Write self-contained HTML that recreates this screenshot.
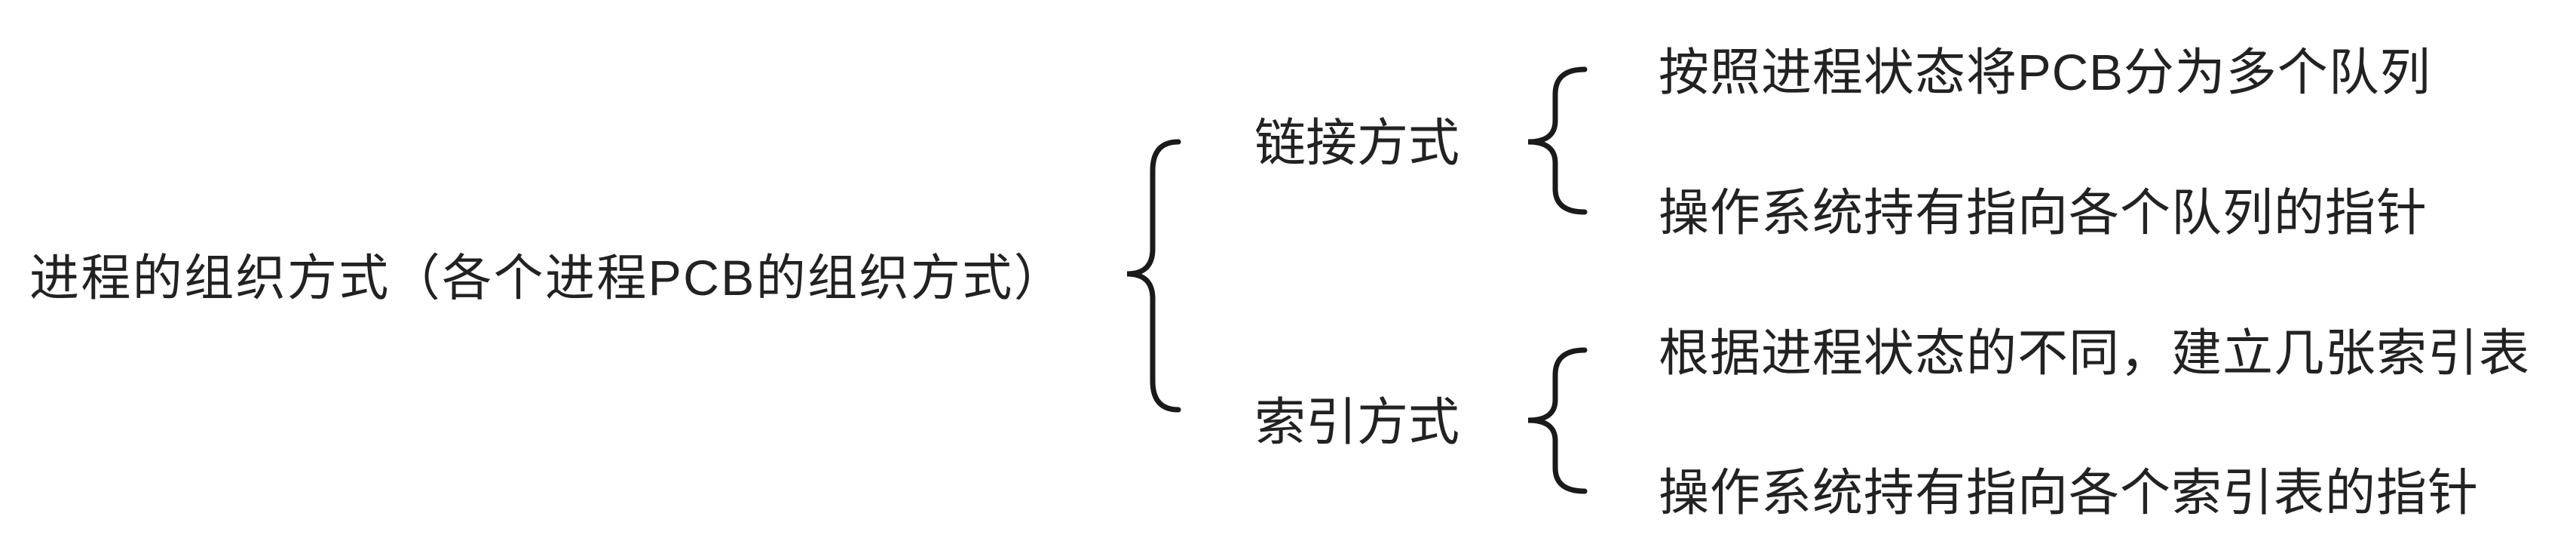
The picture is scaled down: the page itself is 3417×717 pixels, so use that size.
<!DOCTYPE html>
<html><head><meta charset="utf-8"><style>
html,body{margin:0;padding:0;background:#fff;}
body{width:3417px;height:717px;position:relative;overflow:hidden;font-family:"Liberation Sans","Noto Sans CJK SC",sans-serif;color:#222;}
.t{position:absolute;white-space:nowrap;line-height:1;}
.m{font-size:66px;}
.r{font-size:67px;letter-spacing:1px;}
svg{position:absolute;left:0;top:0;}
</style></head><body>
<div class="t m" style="left:39px;top:335px;letter-spacing:2.4px;">进程的组织方式（各个进程PCB的组织方式）</div>
<div class="t m" style="left:1664px;top:156px;font-size:68px;">链接方式</div>
<div class="t m" style="left:1664px;top:526px;font-size:68px;">索引方式</div>
<div class="t r" style="left:2200px;top:63px;">按照进程状态将PCB分为多个队列</div>
<div class="t r" style="left:2200px;top:249px;">操作系统持有指向各个队列的指针</div>
<div class="t r" style="left:2200px;top:435px;">根据进程状态的不同，建立几张索引表</div>
<div class="t r" style="left:2200px;top:620px;">操作系统持有指向各个索引表的指针</div>
<svg width="3417" height="717" fill="none" stroke="#1a1a1a" stroke-width="7" stroke-linecap="round">
<path d="M1563 188 Q1529 188 1529 226 L1529 330 Q1529 363 1495 363 Q1529 363 1529 396 L1529 505 Q1529 543 1563 543"/>
<path d="M2102 92 Q2063 92 2063 125 L2063 160 Q2063 188 2027 188 Q2063 188 2063 216 L2063 250 Q2063 281 2102 281"/>
<path d="M2102 464 Q2063 464 2063 497 L2063 530 Q2063 557 2027 557 Q2063 557 2063 584 L2063 620 Q2063 651 2102 651"/>
</svg>
</body></html>
